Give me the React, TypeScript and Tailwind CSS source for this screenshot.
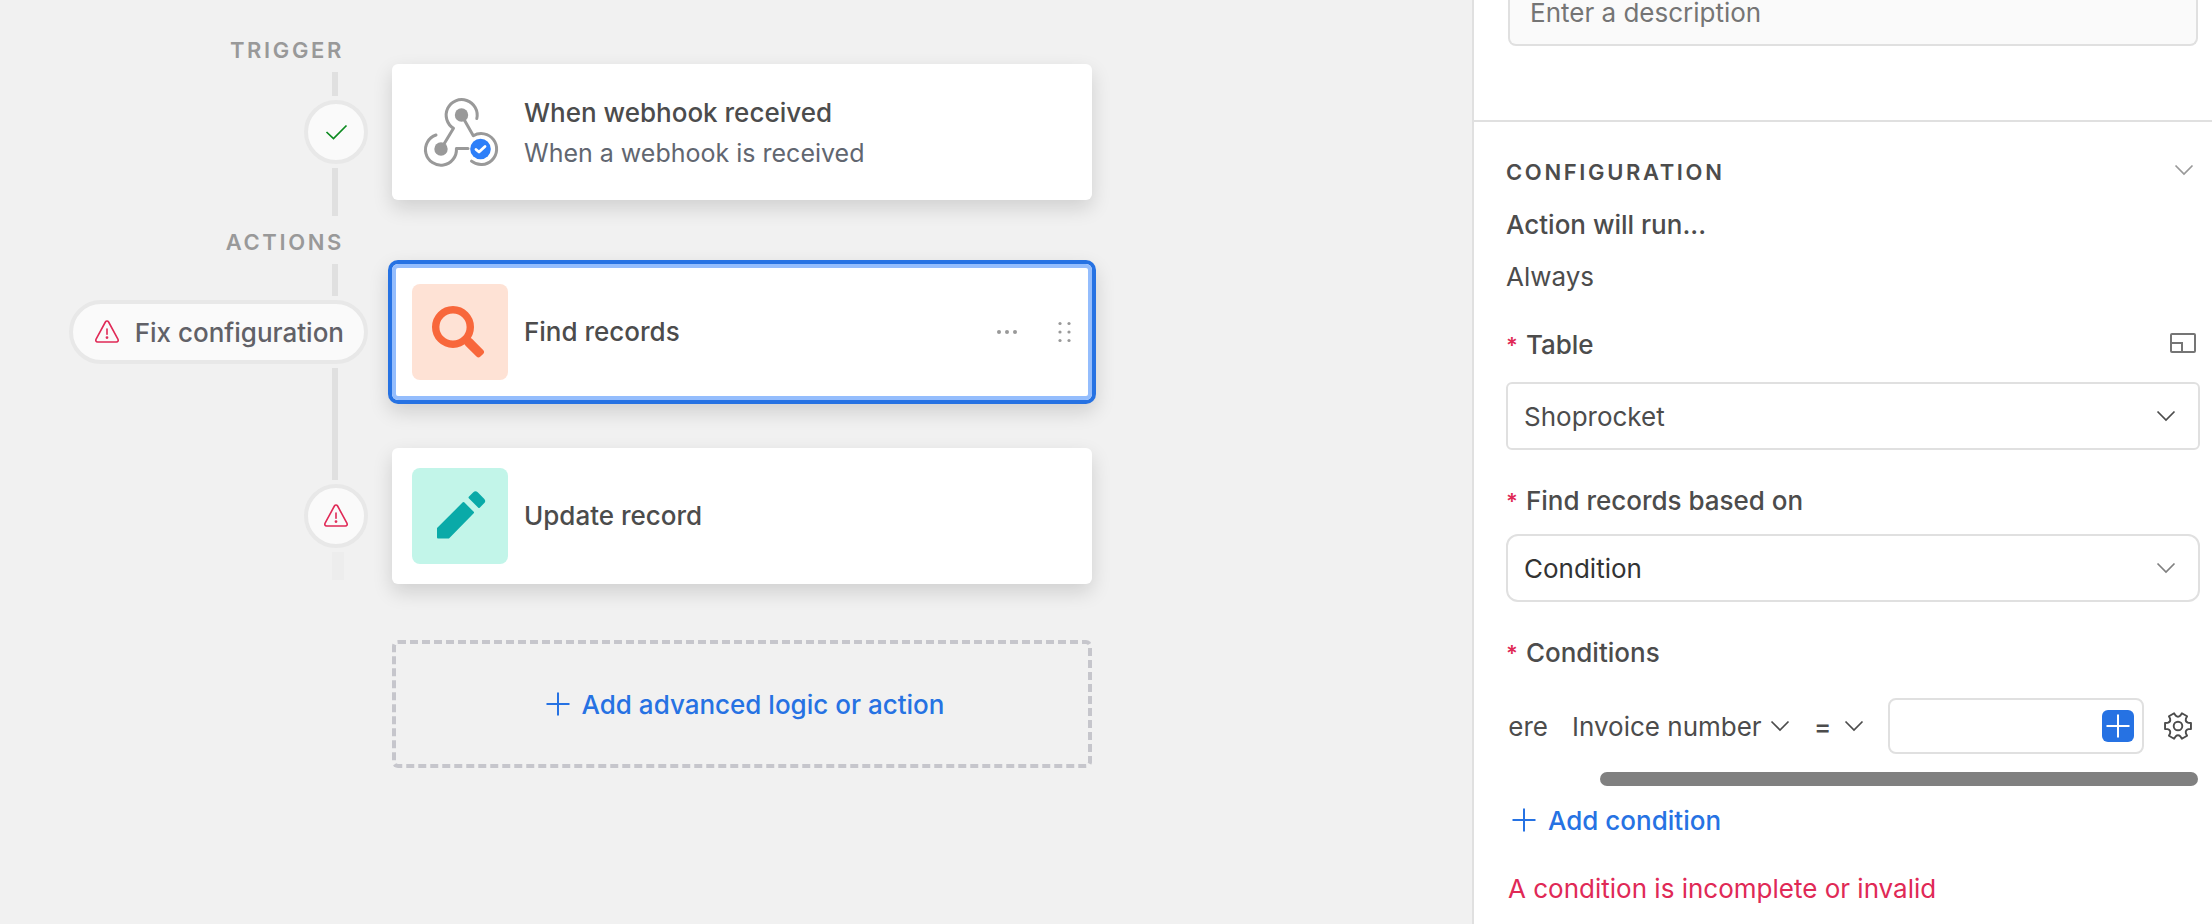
import React from 'react';

const cardShadow = "shadow-[0_8px_20px_rgba(0,0,0,0.14)]";

const WebhookIcon = () => (
  <svg className="size-24" viewBox="0 0 96 96" fill="none" aria-hidden="true">
    <g stroke="#999999" strokeWidth="3" strokeLinecap="round" strokeLinejoin="round">
      <path d="M64.8 34.5A15.5 15.5 0 1 0 41.5 44.3L29 65" />
      <path d="M49.5 31L61.3 51.7A15.5 15.5 0 1 1 59.5 77.2" />
      <path d="M24 51A15.5 15.5 0 1 0 44.4 64.5H56" />
    </g>
    <circle cx="49.5" cy="31" r="6.7" fill="#999999" />
    <circle cx="29" cy="65" r="6.7" fill="#999999" />
    <circle cx="68.5" cy="65" r="10.3" fill="#2d7ff9" />
    <path d="M64 65.5L67 68L73 62.5" stroke="#ffffff" strokeWidth="2.8" strokeLinecap="round" strokeLinejoin="round" />
  </svg>
);

const SearchIcon = () => (
  <svg className="size-24" viewBox="0 0 96 96" fill="none" aria-hidden="true">
    <circle cx="41" cy="43" r="17.3" stroke="#f8673b" strokeWidth="7.4" />
    <rect x="-10" y="-4.7" width="21" height="9.4" rx="2.8" transform="translate(62 63.5) rotate(45)" fill="#f8673b" />
  </svg>
);

const PencilIcon = () => (
  <svg className="size-24" viewBox="0 0 96 96" fill="#0aaaa8" stroke="#0aaaa8" strokeWidth="2" strokeLinejoin="round" aria-hidden="true">
    <path d="M26 60.5L51.5 35L61 44.5L36.5 69.5H26Z" />
    <path d="M57.5 29.5L62 25C63 24 64 24 65 25L71.4 31.4C72.4 32.4 72.4 33.6 71.4 34.6L67 39Z" />
  </svg>
);

const WarningIcon = () => (
  <svg className="size-6 shrink-0" viewBox="0 0 24 24" fill="none" stroke="#e02956" strokeWidth="1.6" strokeLinecap="round" strokeLinejoin="round" aria-hidden="true">
    <path d="M10.4 2L1.1 19.2C.4 20.5 1 22 2.6 22H21.4C23 22 23.6 20.5 22.9 19.2L13.6 2C12.8 .7 11.2 .7 10.4 2Z" />
    <path d="M12 9V14.2" />
    <circle cx="12" cy="17.6" r=".6" fill="#e02956" />
  </svg>
);

const CheckIcon = () => (
  <svg className="size-6" viewBox="0 0 24 24" fill="none" stroke="#0b8a1f" strokeWidth="1.7" aria-hidden="true">
    <path d="M2.5 12L9.5 18.5L22.5 5.5" />
  </svg>
);

const Chevron = ({ className = "" }) => (
  <svg className={`h-3 w-5 shrink-0 ${className}`} viewBox="0 0 20 12" fill="none" stroke="currentColor" strokeWidth="1.7" aria-hidden="true">
    <path d="M1.5 1.5L10 10L18.5 1.5" />
  </svg>
);

const Plus = ({ className = "" }) => (
  <svg className={`size-6 shrink-0 ${className}`} viewBox="0 0 24 24" stroke="currentColor" strokeWidth="2" aria-hidden="true">
    <path d="M12 0.5V23.5M0.5 12H23.5" />
  </svg>
);

const point = (radius: number, degrees: number) => {
  const angle = (degrees * Math.PI) / 180;
  return `${(radius * Math.cos(angle)).toFixed(2)} ${(radius * Math.sin(angle)).toFixed(2)}`;
};

// six teeth, with a shallow curve in each valley
const gearPath =
  [0, 60, 120, 180, 240, 300]
    .map(
      (a, i) =>
        `${i === 0 ? "M" : "L"}${point(10.8, a - 17)}L${point(13.3, a - 13)}L${point(13.3, a + 13)}L${point(10.8, a + 17)}Q${point(8.2, a + 30)} ${point(10.8, a + 43)}`
    )
    .join("") + "Z";

const GearIcon = () => (
  <svg className="size-7" viewBox="-14 -14 28 28" fill="none" stroke="#4c4c4c" strokeWidth="1.9" strokeLinejoin="round" aria-hidden="true">
    <path d={gearPath} />
    <circle r="4.3" />
  </svg>
);

const Line = ({ className }: { className: string }) => <div className={`mr-[30px] w-1.5 bg-[#e0e0e0] ${className}`}></div>;

const RequiredLabel = ({ htmlFor, children }: { htmlFor: string; children: React.ReactNode }) => (
  <label htmlFor={htmlFor} className="flex gap-2 font-medium">
    <span className="text-[22px] font-semibold text-[#e02956]">*</span>
    {children}
  </label>
);

const StatusRail = () => (
  <div className="flex w-[368px] shrink-0 flex-col items-end pt-9">
    <h2 className="mr-6 text-[22px] leading-7 font-semibold tracking-[0.12em] text-[#999999]">TRIGGER</h2>
    <Line className="mt-2 h-6" />
    <div className="my-1 flex size-16 items-center justify-center rounded-full border-4 border-[#e8e8e8] bg-[#fafafa]">
      <CheckIcon />
    </div>
    <Line className="h-12" />
    <h2 className="mt-3 mr-6 text-[22px] leading-7 font-semibold tracking-[0.12em] text-[#999999]">ACTIONS</h2>
    <Line className="mt-2 h-8" />
    <button className="my-1 flex h-16 items-center gap-4 rounded-full border-4 border-[#e8e8e8] bg-[#fafafa] pr-5 pl-[22px] font-medium text-[#616167]">
      <WarningIcon />
      <span className="pt-0.5">Fix configuration</span>
    </button>
    <Line className="h-28" />
    <button aria-label="Show problem" className="my-1 flex size-16 items-center justify-center rounded-full border-4 border-[#e8e8e8] bg-[#fafafa]">
      <WarningIcon />
    </button>
    <div className="mr-6 h-7 w-3 bg-[#ededed]"></div>
  </div>
);

const Steps = () => (
  <div className="flex w-[700px] flex-col pt-16">
    <article className={`flex h-34 items-center gap-4 rounded-md bg-white px-5 ${cardShadow}`}>
      <WebhookIcon />
      <div className="pt-0.5 leading-[41px]">
        <h3 className="font-medium">When webhook received</h3>
        <p className="text-[25px] text-[#616670]">When a webhook is received</p>
      </div>
    </article>

    <article className="mt-16 flex h-34 items-center gap-4 rounded-md bg-white px-5 shadow-[inset_0_0_0_4px_#94bdfd,0_0_0_4px_#2672e3,0_8px_20px_4px_rgba(0,0,0,0.14)]">
      <div className="rounded-lg bg-[#fee2d5]">
        <SearchIcon />
      </div>
      <h3 className="flex-1 font-medium">Find records</h3>
      <button aria-label="More options" className="text-[#999999]">
        <svg className="h-5 w-6" viewBox="0 0 24 20" fill="currentColor">
          <circle cx="3" cy="10" r="2" />
          <circle cx="11" cy="10" r="2" />
          <circle cx="19" cy="10" r="2" />
        </svg>
      </button>
      <button aria-label="Drag to reorder" className="ml-3 text-[#999999]">
        <svg className="size-6" viewBox="0 0 24 24" fill="currentColor">
          {[3.5, 12, 20.5].map((y) => (
            <React.Fragment key={y}>
              <circle cx="12" cy={y} r="1.6" />
              <circle cx="21" cy={y} r="1.6" />
            </React.Fragment>
          ))}
        </svg>
      </button>
    </article>

    <article className={`mt-12 flex h-34 items-center gap-4 rounded-md bg-white px-5 ${cardShadow}`}>
      <div className="rounded-lg bg-[#c2f5e9]">
        <PencilIcon />
      </div>
      <h3 className="font-medium">Update record</h3>
    </article>

    <button className="mt-14 flex h-32 items-center justify-center gap-3 rounded-md border-4 border-dashed border-[#c6c6cc] pl-1.5 font-medium text-[#2672e3]">
      <Plus />
      <span className="pt-0.5">Add advanced logic or action</span>
    </button>
  </div>
);

const ConfigPanel = () => (
  <aside className="w-[740px] shrink-0 overflow-hidden border-l-2 border-[#e0e0e0] bg-white">
    <div className="h-[122px] border-b-2 border-[#e0e0e0] pr-3.5 pl-[34px]">
      <textarea
        aria-label="Description"
        placeholder="Enter a description"
        className="block h-[46px] w-full resize-none overflow-hidden rounded-b-lg border-2 border-t-0 border-[#e0e0e0] bg-[#fafafa] px-5 leading-[26px] placeholder:text-[#757575]"
      ></textarea>
    </div>

    <div className="pt-8 pr-3 pl-8">
      <div className="flex items-center justify-between pr-1.5">
        <h2 className="text-[22px] leading-9 font-semibold tracking-[0.12em]">CONFIGURATION</h2>
        <button aria-label="Collapse configuration" className="pb-1 text-[#999999]">
          <Chevron />
        </button>
      </div>
      <h3 className="mt-[17px] font-medium">Action will run...</h3>
      <p className="mt-4">Always</p>

      <div className="mt-8 flex items-center justify-between pr-1">
        <RequiredLabel htmlFor="table">Table</RequiredLabel>
        <button aria-label="Open table preview" className="pb-1 text-[#757575]">
          <svg className="block h-5 w-[26px]" viewBox="0 0 26 20" fill="none" stroke="currentColor" strokeWidth="2">
            <rect x="1" y="1" width="24" height="18" rx="1" />
            <path d="M1 10H12V19" />
          </svg>
        </button>
      </div>
      <div className="mt-[19px] grid items-center">
        <select id="table" className="col-start-1 row-start-1 h-[68px] appearance-none rounded-md border-2 border-[#e0e0e0] bg-white px-4 pt-0.5">
          <option>Shoprocket</option>
        </select>
        <Chevron className="pointer-events-none col-start-1 row-start-1 mr-6 justify-self-end" />
      </div>

      <div className="mt-[33px]">
        <RequiredLabel htmlFor="basis">Find records based on</RequiredLabel>
      </div>
      <div className="mt-[15px] grid items-center">
        <select id="basis" className="col-start-1 row-start-1 h-[68px] appearance-none rounded-xl border-2 border-[#e0e0e0] bg-white px-4 pt-0.5 text-[#333333]">
          <option>Condition</option>
        </select>
        <Chevron className="pointer-events-none col-start-1 row-start-1 mr-6 justify-self-end text-[#808080]" />
      </div>

      <div className="mt-[33px]">
        <RequiredLabel htmlFor="condition-value">Conditions</RequiredLabel>
      </div>

      <div className="mt-[27px] ml-0.5 mr-0.5">
        <div className="flex items-center justify-end overflow-hidden pr-1.5">
          <span className="mr-6 shrink-0 pt-0.5">Where</span>
          <div className="mr-6 grid shrink-0 items-center">
            <select aria-label="Field" className="col-start-1 row-start-1 appearance-none pt-0.5 pr-7">
              <option>Invoice number</option>
            </select>
            <Chevron className="pointer-events-none col-start-1 row-start-1 justify-self-end" />
          </div>
          <div className="mr-6 grid shrink-0 items-center">
            <select aria-label="Operator" className="col-start-1 row-start-1 appearance-none pt-0.5 pr-8 font-medium">
              <option>=</option>
            </select>
            <Chevron className="pointer-events-none col-start-1 row-start-1 justify-self-end" />
          </div>
          <div className="flex h-14 w-64 shrink-0 items-center rounded-lg border-2 border-[#e0e0e0] pr-2">
            <input id="condition-value" type="text" className="w-full min-w-0 flex-1 px-3 outline-none" />
            <button aria-label="Insert value" className="flex size-8 items-center justify-center rounded-md bg-[#2672e3] text-white">
              <Plus />
            </button>
          </div>
          <button aria-label="Condition settings" className="ml-5 shrink-0">
            <GearIcon />
          </button>
        </div>
        <div className="mt-[18px] ml-[92px] h-3.5 rounded-full bg-[#808080]"></div>
      </div>

      <button className="mt-[15px] ml-1.5 flex items-center gap-3 font-medium text-[#2672e3]">
        <Plus />
        <span className="pt-0.5">Add condition</span>
      </button>
      <p role="alert" className="mt-8 ml-0.5 text-[#e02956]">
        A condition is incomplete or invalid
      </p>
    </div>
  </aside>
);

const App = () => {
  return (
    <div className="flex min-h-screen bg-[#f1f1f1] font-['Inter','Liberation_Sans',sans-serif] text-[26px] leading-9 text-[#4c4c4c]">
      <main className="flex flex-1 gap-6">
        <StatusRail />
        <Steps />
      </main>
      <ConfigPanel />
    </div>
  );
};

export default App;
